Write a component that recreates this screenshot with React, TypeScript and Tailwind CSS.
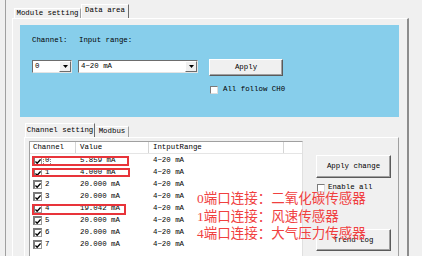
import React from "react";

const mono = { fontFamily: '"Liberation Mono", "DejaVu Sans Mono", monospace' };

const rows = [
  { ch: "0", value: "5.859 mA" },
  { ch: "1", value: "4.000 mA" },
  { ch: "2", value: "20.000 mA" },
  { ch: "3", value: "20.000 mA" },
  { ch: "4", value: "19.042 mA" },
  { ch: "5", value: "20.000 mA" },
  { ch: "6", value: "20.000 mA" },
  { ch: "7", value: "20.000 mA" },
];

function CheckBox({ checked }: { checked?: boolean }) {
  return (
    <div className="w-[9px] h-[9px] shrink-0 bg-white border-t-2 border-l-2 border-b border-r border-t-[#7a7a7a] border-l-[#7a7a7a] border-b-[#9a9a9a] border-r-[#9a9a9a] flex items-center justify-center">
      {checked && (
        <svg width="7" height="7" viewBox="0 0 7 7">
          <path d="M0.5 3.5 L2.5 5.5 L6.5 1" stroke="#000" strokeWidth="1.6" fill="none" />
        </svg>
      )}
    </div>
  );
}

function Combo({ value, width }: { value: string; width: string }) {
  return (
    <div className={`${width} h-[13px] bg-white border border-t-[#6d6d6d] border-l-[#6d6d6d] border-b-[#e4e4e4] border-r-[#e4e4e4] flex items-stretch`}>
      <div className="flex-1 pl-[2px] pt-[1px] flex items-center text-[7.4px] leading-none">{value}</div>
      <div className="w-[12px] bg-[#f0f0f0] border border-t-white border-l-white border-b-[#6d6d6d] border-r-[#6d6d6d] flex items-center justify-center">
        <svg width="5" height="3" viewBox="0 0 5 3">
          <path d="M0 0 H5 L2.5 3 Z" fill="#000" />
        </svg>
      </div>
    </div>
  );
}

function Button({ label, className }: { label: string; className: string }) {
  return (
    <div
      className={`${className} bg-[#f0f0f0] border border-t-white border-l-white border-b-[#5a5a5a] border-r-[#5a5a5a] shadow-[inset_-1px_-1px_0_#a0a0a0] flex items-center justify-center pt-[1px] text-[7.4px] leading-none`}
    >
      {label}
    </div>
  );
}

export default function App() {
  return (
    <div className="w-[422px] h-[256px] bg-[#f0f0f0] overflow-hidden relative text-black" style={mono}>
      <div className="flex h-full">
        <div className="w-[6px] shrink-0 border-r border-[#a0a0a0]" />
        <div className="ml-[6px] w-[397px] flex flex-col">
          {/* top tabs */}
          <div className="h-[18px] shrink-0 flex items-end pl-[2px]">
            <div className="w-[67px] h-[10px] border-t border-l border-r border-t-white border-l-white border-r-[#a0a0a0] flex items-center justify-center text-[7.4px] leading-none">
              Module setting
            </div>
            <div className="w-[48px] h-[14px] border-t border-l border-r border-t-white border-l-white border-r-[#6d6d6d] flex items-center justify-center pb-[2px] text-[7.4px] leading-none">
              Data area
            </div>
          </div>
          {/* outer panel */}
          <div className="flex-1 min-h-0 border-t border-l border-white border-r-2 border-r-[#8c8c8c] pl-[7px] pt-[6px]">
            <div className="w-[379px] h-[92px] bg-[#87ceeb] pl-[12px] pt-[11px]">
              <div className="flex h-[10px] items-center text-[7.4px] leading-none">
                <div className="w-[47px]">Channel:</div>
                <div>Input range:</div>
              </div>
              <div className="flex mt-[14px] items-start">
                <Combo value="0" width="w-[40px]" />
                <div className="ml-[6px]">
                  <Combo value="4~20 mA" width="w-[120px]" />
                </div>
                <div className="ml-[11px] -mt-[1px] flex flex-col">
                  <Button label="Apply" className="w-[74px] h-[17px]" />
                  <div className="flex items-center mt-[10px] ml-[1px] gap-[5px]">
                    <div className="w-[8px] h-[8px] bg-white border border-t-[#7a7a7a] border-l-[#7a7a7a] border-b-[#dcdcdc] border-r-[#dcdcdc]" />
                    <span className="text-[7.4px] leading-none">All follow CH0</span>
                  </div>
                </div>
              </div>
            </div>

            {/* inner tabs */}
            <div className="mt-[6px] h-[14px] flex items-end pl-[5px]">
              <div className="w-[70px] h-[14px] border-t border-l border-r border-t-white border-l-white border-r-[#6d6d6d] flex items-center justify-center text-[7.4px] leading-none">
                Channel setting
              </div>
              <div className="ml-[1px] w-[33px] h-[11px] border-t border-r border-t-white border-r-[#a0a0a0] flex items-center justify-center text-[7.4px] leading-none">
                Modbus
              </div>
            </div>

            {/* inner panel */}
            <div className="ml-[4px] w-[375px] h-[119px] border-t border-l border-white border-r border-r-[#a0a0a0] pl-[4px] pt-[3px] flex">
              <div className="w-[274px] h-[120px] bg-white border border-t-[#a0a0a0] border-l-[#a0a0a0] border-b-white border-r-[#e0e0e0] text-[7.4px] leading-none">
                <div className="flex h-[12px] border-b border-[#e5e5e5]">
                  <div className="w-[46px] border-r border-[#d5d5d5] pl-[3px] pt-[1px] flex items-center">Channel</div>
                  <div className="w-[73px] border-r border-[#d5d5d5] pl-[4px] pt-[1px] flex items-center">Value</div>
                  <div className="w-[135px] border-r border-[#d5d5d5] pl-[4px] pt-[1px] flex items-center">IntputRange</div>
                  <div className="flex-1" />
                </div>
                {rows.map((r) => (
                  <div key={r.ch} className="flex h-[12px] items-center pt-[1px]">
                    <div className="w-[46px] pl-[3px] flex items-center">
                      <CheckBox checked />
                      <span
                        className={`ml-[1px] px-[1px] h-[10px] pt-[1px] flex items-center ${
                          r.ch === "0" ? "border border-dotted border-[#888]" : "border border-transparent"
                        }`}
                      >
                        {r.ch}
                      </span>
                    </div>
                    <div className="w-[73px] pl-[4px] pt-[1px]">{r.value}</div>
                    <div className="w-[135px] pl-[4px] pt-[1px]">4~20 mA</div>
                  </div>
                ))}
              </div>
              <div className="pl-[13px] pt-[14px] flex flex-col">
                <Button label="Apply change" className="w-[75px] h-[23px]" />
                <div className="flex items-center mt-[6px] ml-[1px] gap-[3px]">
                  <div className="w-[8px] h-[8px] bg-white border border-t-[#7a7a7a] border-l-[#7a7a7a] border-b-[#dcdcdc] border-r-[#dcdcdc]" />
                  <span className="text-[7.4px] leading-none">Enable all</span>
                </div>
                <Button label="Trend Log" className="w-[75px] h-[22px] mt-[37px]" />
              </div>
            </div>
          </div>
        </div>
      </div>

      {/* annotations */}
      <div className="absolute left-[32px] top-[156px] w-[97px] h-[10px] border-2 border-[#e8343a]" />
      <div className="absolute left-[32px] top-[168px] w-[98px] h-[9px] border-2 border-[#e8343a]" />
      <div className="absolute left-[32px] top-[204px] w-[94px] h-[11px] border-2 border-[#e8343a]" />
      <div
        className="absolute left-[197px] top-[190px] text-[13.5px] leading-[17.5px] text-[#f0403f]"
        style={{ fontFamily: '"Liberation Serif", "Noto Sans CJK SC", serif' }}
      >
        <div>0端口连接：二氧化碳传感器</div>
        <div>1端口连接：风速传感器</div>
        <div>4端口连接：大气压力传感器</div>
      </div>
    </div>
  );
}
